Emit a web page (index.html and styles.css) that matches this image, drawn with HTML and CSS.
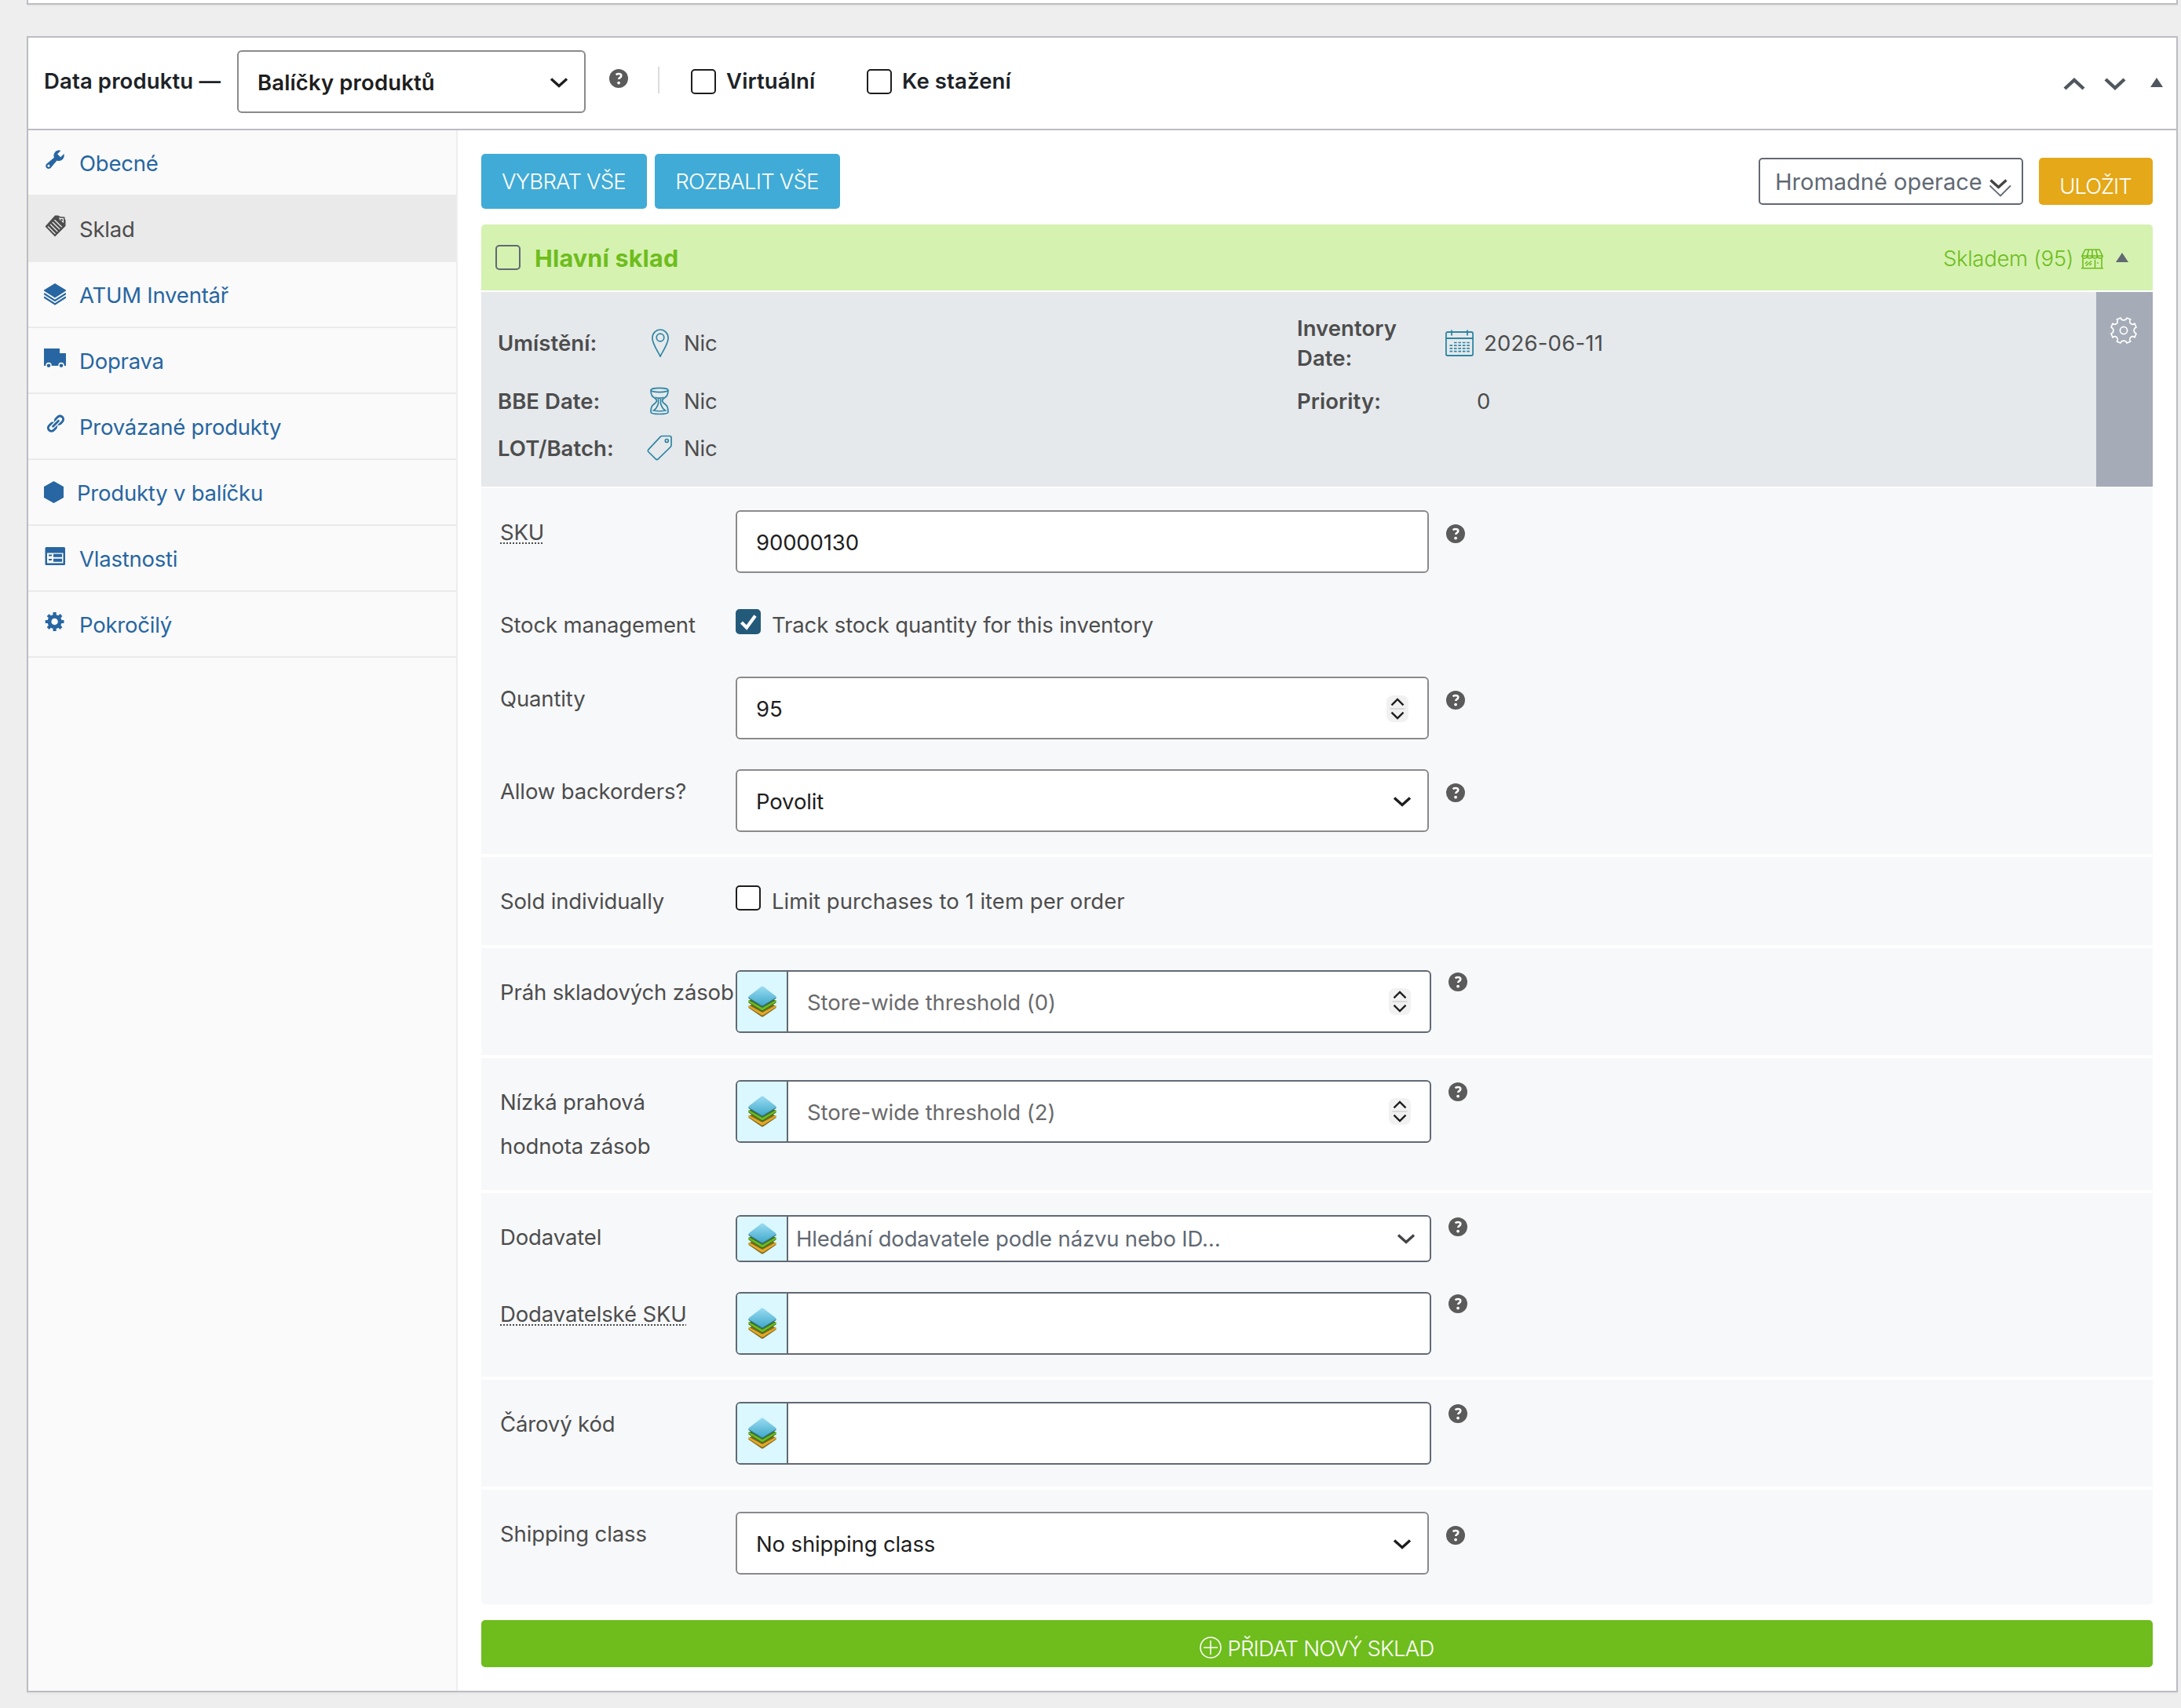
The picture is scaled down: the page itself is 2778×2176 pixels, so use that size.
FILE: index.html
```html
<!DOCTYPE html>
<html lang="cs">
<head>
  <meta charset="UTF-8" />
  <meta name="viewport" content="width=device-width, initial-scale=1.0"/>
  <title>Data produktu</title>
  <link rel="stylesheet" href="styles.css">
</head>
<body>
  <!-- Shared icons -->
  <svg class="sprite" width="0" height="0">
    <defs>
      <linearGradient id="blueLayer" x1="0" y1="0" x2="0" y2="1">
        <stop offset="0" stop-color="#9adcf2" />
        <stop offset="1" stop-color="#41a9cb" />
      </linearGradient>
    </defs>
    <symbol id="help" viewBox="0 0 24 24">
      <circle cx="12" cy="12" r="12" fill="#5b5b5b" />
      <path d="M8.6 7.2c1-.8 2.2-1.2 3.5-1.2 2 0 3.2.9 3.2 2.4 0 1.3-.8 1.9-1.7 2.5-.9.6-1.3 1-1.3 2.2" fill="none" stroke="#fff" stroke-width="2.6" />
      <circle cx="12.1" cy="17.6" r="1.9" fill="#fff" />
    </symbol>
    <symbol id="chevron" viewBox="0 0 24 14">
      <path d="M2 2.5 L12 11.5 L22 2.5" fill="none" stroke="currentColor" stroke-width="3.4" />
    </symbol>
    <symbol id="stepper" viewBox="0 0 28 34">
      <rect width="28" height="34" rx="8" fill="#f1f1f1" />
      <path d="M4.5 17 H23.5" stroke="#dadada" stroke-width="2" />
      <path d="M6.5 12.3 L14 5 L21.5 12.3 M6.5 21.7 L14 29 L21.5 21.7" fill="none" stroke="#1e1e1e" stroke-width="2.4" />
    </symbol>
    <symbol id="layers" viewBox="0 0 36 40">
      <path d="M.5 26 L4 24 L32 24 L35.5 26 V28 L19.5 39 Q18 40 16.5 39 L.5 28 Z" fill="#7d6a25" />
      <path d="M.5 24.5 L18 34 L35.5 24.5 V27 L19.5 37 Q18 38 16.5 37 L.5 27 Z" fill="#e6a923" />
      <path d="M.5 19 L4 17 L32 17 L35.5 19 V21.5 L19.5 32 Q18 33 16.5 32 L.5 21.5 Z" fill="#3c6f24" />
      <path d="M.5 18 L18 28 L35.5 18 V20.5 L19.5 30.5 Q18 31.5 16.5 30.5 L.5 20.5 Z" fill="#6ebd1c" />
      <path d="M.5 14 L18 25 L35.5 14 V16 L19.5 26 Q18 27 16.5 26 L.5 16 Z" fill="#35738a" />
      <path d="M16.5 .9 Q18 0 19.5 .9 L35 13 Q36 14 35 15 L19.5 24.5 Q18 25.5 16.5 24.5 L1 15 Q0 14 1 13 Z" fill="url(#blueLayer)" />
    </symbol>
  </svg>

  <div class="prev-box"></div>

  <div class="postbox">
    <div class="postbox-header">
      <span class="title bold">Data produktu —</span>
      <div class="type-select"><span class="bold">Balíčky produktů</span><svg class="chevron"><use href="#chevron" /></svg></div>
      <svg class="help"><use href="#help" /></svg>
      <span class="divider"></span>
      <span class="checkbox"></span>
      <span class="virtual bold">Virtuální</span>
      <span class="checkbox"></span>
      <span class="download bold">Ke stažení</span>
      <div class="handles">
        <svg class="h-up" viewBox="0 0 28 16"><path d="M2 14 L14 3 L26 14" fill="none" stroke="#50575e" stroke-width="4.4" /></svg>
        <svg class="h-down" viewBox="0 0 28 16"><path d="M2 2 L14 13 L26 2" fill="none" stroke="#50575e" stroke-width="4.4" /></svg>
        <svg class="triangle" viewBox="0 0 16 12"><path d="M8 0 L16 12 H0 Z" fill="#50575e" /></svg>
      </div>
    </div>

    <div class="panel-wrap">
      <ul class="tabs">
        <li>
          <svg class="tab-icon raised" viewBox="0.5 1 19 19"><path fill="currentColor" d="M16.68 9.77c-1.34 1.34-3.3 1.67-4.95.99l-5.41 6.52c-.99.99-2.59.99-3.58 0s-.99-2.59 0-3.57l6.52-5.42c-.68-1.65-.35-3.61.99-4.95 1.28-1.28 3.12-1.62 4.72-1.06l-2.89 2.89 2.82 2.82 2.86-2.87c.53 1.58.18 3.39-1.08 4.65zM3.81 16.21c.4.39 1.04.39 1.43 0 .4-.4.4-1.04 0-1.43-.39-.4-1.03-.4-1.43 0-.39.39-.39 1.03 0 1.43z"/></svg>
          <span>Obecné</span>
        </li>
        <li class="active">
          <svg class="tab-icon raised" viewBox="0 0 28 28">
            <path d="M14 0.5 H18 L27.5 6 V14 L14 27.5 L1.5 14.5 Z" fill="currentColor" />
            <path d="M5 14.5 L14.5 24 M8 11.8 L17.3 21 M10.8 9 L20 18 M13.5 6.3 L22.7 15.2" stroke="#eaeaea" stroke-width="1.3" />
            <path d="M17.5 2.5 L25.8 3.2 L25.8 11.5 L20 7 Z" fill="#eaeaea" stroke="currentColor" stroke-width="1.4" />
            <circle cx="22.5" cy="6.3" r="1.4" fill="currentColor" />
          </svg>
          <span>Sklad</span>
        </li>
        <li>
          <svg class="tab-icon" viewBox="0 0 28 28">
            <path d="M14 0 L28 8.5 V9.5 L14 18.5 L0 9.5 V8.5 Z" fill="currentColor" />
            <path d="M0 13 L14 22 L28 13 M0 17.5 L14 26.5 L28 17.5" fill="none" stroke="currentColor" stroke-width="2.2" />
          </svg>
          <span>ATUM Inventář</span>
        </li>
        <li>
          <svg class="tab-icon raised" viewBox="0 0 28 28">
            <path d="M0 2 H20 V8 H28 V24 H0 Z" fill="currentColor" />
            <circle cx="6" cy="23.5" r="3.7" fill="#fafafa" /><circle cx="22" cy="23.5" r="3.7" fill="#fafafa" />
            <circle cx="6" cy="23.8" r="2.3" fill="currentColor" /><circle cx="22" cy="23.8" r="2.3" fill="currentColor" />
          </svg>
          <span>Doprava</span>
        </li>
        <li>
          <svg class="tab-icon raised" viewBox="-1 -0.5 21.5 21.5"><path fill="currentColor" d="M17.74 2.76c1.68 1.69 1.68 4.41 0 6.1l-1.53 1.52c-1.12 1.12-2.7 1.47-4.14 1.09l2.62-2.61.76-.77.76-.76c.84-.84.84-2.2 0-3.04-.84-.85-2.2-.85-3.04 0l-.77.76-3.38 3.38c-.37-1.44-.02-3.02 1.1-4.14l1.52-1.53c1.69-1.68 4.42-1.68 6.1 0zM8.59 13.43l5.34-5.34c.42-.42.42-1.1 0-1.52-.44-.43-1.13-.39-1.53 0l-5.33 5.34c-.42.42-.42 1.1 0 1.52.44.43 1.13.39 1.52 0zm-.76 2.29l4.14-4.15c.38 1.44.03 3.02-1.09 4.14l-1.52 1.53c-1.69 1.68-4.41 1.68-6.1 0-1.68-1.68-1.68-4.42 0-6.1l1.53-1.52c1.12-1.12 2.7-1.47 4.14-1.1l-4.14 4.15c-.85.84-.85 2.2 0 3.05.84.84 2.2.84 3.04 0z"/></svg>
          <span>Provázané produkty</span>
        </li>
        <li>
          <svg class="tab-icon narrow" viewBox="0 0 25 28"><path d="M12.5 0 L25 7 V21 L12.5 28 L0 21 V7 Z" fill="currentColor" /></svg>
          <span>Produkty v balíčku</span>
        </li>
        <li>
          <svg class="tab-icon raised" viewBox="0 0 28 28">
            <rect x="1.5" y="3" width="25.5" height="23" rx="1.5" fill="currentColor" />
            <rect x="4" y="10.5" width="20.5" height="13" fill="#fafafa" />
            <path d="M6 13.5 H10 M6 19 H10" stroke="currentColor" stroke-width="2" />
            <path d="M12 13.8 H23 M12 19.7 H23" stroke="currentColor" stroke-width="4" />
          </svg>
          <span>Vlastnosti</span>
        </li>
        <li>
          <svg class="tab-icon raised" viewBox="-0.2 0.5 20 20"><path fill="currentColor" d="M18 12h-2.18c-.17.7-.44 1.35-.81 1.93l1.54 1.54-2.1 2.1-1.54-1.54c-.58.36-1.23.63-1.91.79V19H8v-2.18c-.68-.16-1.33-.43-1.91-.79l-1.54 1.54-2.12-2.12 1.54-1.54c-.36-.58-.63-1.23-.79-1.91H1V9.03h2.17c.16-.7.44-1.35.8-1.94L2.43 5.55l2.1-2.1 1.54 1.54c.58-.37 1.24-.64 1.93-.81V2h3v2.18c.68.16 1.33.43 1.91.79l1.54-1.54 2.12 2.12-1.54 1.54c.36.59.64 1.24.8 1.94H18V12zm-8.5 1.5c1.66 0 3-1.34 3-3s-1.34-3-3-3-3 1.34-3 3 1.34 3 3 3z"/></svg>
          <span>Pokročilý</span>
        </li>
      </ul>

      <div class="content">
        <div class="toolbar">
          <button class="btn blue">VYBRAT VŠE</button>
          <button class="btn blue">ROZBALIT VŠE</button>
          <div class="bulk">
            <span>Hromadné operace</span>
            <svg viewBox="0 0 28 24">
              <path d="M1.5 2.5 L11.5 11.5 L21.5 2.5" fill="none" stroke="#444" stroke-width="3.4" />
              <path d="M.5 9.5 L14 22.5 L27 9.5" fill="none" stroke="#616973" stroke-width="1.8" />
            </svg>
          </div>
          <button class="btn orange">ULOŽIT</button>
        </div>

        <div class="inv-header">
          <span class="checkbox light"></span>
          <span class="inv-name">Hlavní sklad</span>
          <span class="inv-stock">Skladem (95)</span>
          <svg class="store" viewBox="0 0 28 26">
            <g fill="none" stroke="#6ebd1c" stroke-width="1.6">
              <path d="M5 1 H23 L27 9 H1 Z M9.5 1 L7.5 9 M14 1 V9 M18.5 1 L20.5 9" />
              <path d="M1 9 a3.25 3 0 0 0 6.5 0 a3.25 3 0 0 0 6.5 0 a3.25 3 0 0 0 6.5 0 a3.25 3 0 0 0 6.5 0" />
              <path d="M2 12 V24.5 M26 12 V24.5 M0 24.8 H28 M17.5 24 V14 M5 19 L8 16 M6 21.5 L13 15.5 M10.5 21 L13 18.5" />
            </g>
            <circle cx="21" cy="18" r="1" fill="#6ebd1c" />
          </svg>
          <svg class="triangle" viewBox="0 0 16 12"><path d="M8 0 L16 12 H0 Z" fill="#616973" /></svg>
        </div>

        <div class="inv-info">
          <div class="info-grid">
            <span class="info-label">Umístění:</span>
            <span class="info-value">
              <svg viewBox="0 0 36 36"><g fill="none" stroke="#2f85a3" stroke-width="1.7"><path d="M18 35 C14 27 7.9 19 7.9 11.5 A10.1 10.5 0 0 1 28.1 11.5 C28.1 19 22 27 18 35 Z" /><circle cx="18" cy="11" r="4.8" /></g></svg>
              Nic
            </span>
            <span class="info-label">Inventory Date:</span>
            <span class="info-value date">
              <svg viewBox="0 0 36 36"><g fill="none" stroke="#2f85a3" stroke-width="1.8"><rect x=".9" y="4" width="34.2" height="30" rx="2" /><path d="M1 12 H35 M8 1.5 V8.5 M28 1.5 V8.5" /></g><path d="M11 17.5 H32 M5.5 21.2 H32 M5.5 24.9 H32 M5.5 28.6 H32" stroke="#2f85a3" stroke-width="1.7" stroke-dasharray="3.6 1.85" /></svg>
              2026-06-11
            </span>

            <span class="info-label">BBE Date:</span>
            <span class="info-value">
              <svg viewBox="0 0 36 36"><g fill="none" stroke="#2f85a3" stroke-width="1.7"><ellipse cx="17" cy="4" rx="11" ry="2.6" /><path d="M6 4 C6 12 9 12.5 12 15 C14.5 17 13 19.5 11 21 C7 24 6 26 6 32 Q6 34.5 17 34.5 Q28 34.5 28 32 C28 26 27 24 23 21 C21 19.5 19.5 17 22 15 C25 12.5 28 12 28 4" /><path d="M11.5 13.2 Q17 15 22.5 13.2 M15.5 14 V21 Q14 27 9.5 30 Q17 31.5 24.5 30 Q20 27 18.5 21 V14" /></g></svg>
              Nic
            </span>
            <span class="info-label">Priority:</span>
            <span class="info-value priority">0</span>

            <span class="info-label">LOT/Batch:</span>
            <span class="info-value">
              <svg viewBox="0 0 36 36"><g fill="none" stroke="#2f85a3" stroke-width="1.7"><path d="M20.5 2.5 H30 Q32 2.5 32 4.5 V14 Q32 15.5 31 16.5 L15 32 Q13.7 33 12.5 32 L2.8 22.5 Q1.6 21 2.8 19.8 L18 3.6 Q19 2.5 20.5 2.5 Z" /><circle cx="26.3" cy="8.5" r="2" /></g></svg>
              Nic
            </span>
          </div>
          <div class="inv-settings">
            <svg viewBox="0 0 34 34"><g fill="none" stroke="#fff" stroke-width="1.7" stroke-linejoin="round"><path d="M21 1 L25.8 3 A3.6 3.6 0 0 0 31 8.2 L33 13 A4.2 4.2 0 0 0 33 21 L31 25.8 A3.6 3.6 0 0 0 25.8 31 L21 33 A4.2 4.2 0 0 0 13 33 L8.2 31 A3.6 3.6 0 0 0 3 25.8 L1 21 A4.2 4.2 0 0 0 1 13 L3 8.2 A3.6 3.6 0 0 0 8.2 3 L13 1 A4.2 4.2 0 0 0 21 1 Z" /><circle cx="17" cy="17" r="4.6" /></g></svg>
          </div>
        </div>

        <div class="group">
          <div class="row">
            <label><abbr>SKU</abbr></label>
            <div class="field">90000130</div>
            <svg class="help"><use href="#help" /></svg>
          </div>
          <div class="row">
            <label>Stock management</label>
            <span class="checkbox checked"><svg viewBox="0 0 32 32"><path d="M7.5 17 L14 23.5 L25 8.5" fill="none" stroke="#fff" stroke-width="4.2" /></svg></span>
            <span>Track stock quantity for this inventory</span>
          </div>
          <div class="row">
            <label>Quantity</label>
            <div class="field">95<svg class="stepper"><use href="#stepper" /></svg></div>
            <svg class="help"><use href="#help" /></svg>
          </div>
          <div class="row">
            <label>Allow backorders?</label>
            <div class="field">Povolit<svg class="chevron"><use href="#chevron" /></svg></div>
            <svg class="help"><use href="#help" /></svg>
          </div>
        </div>

        <div class="group">
          <div class="row">
            <label>Sold individually</label>
            <span class="checkbox"></span>
            <span class="limit">Limit purchases to 1 item per order</span>
          </div>
        </div>

        <div class="group">
          <div class="row">
            <label>Práh skladových zásob</label>
            <div class="field atum"><span class="addon"><svg><use href="#layers" /></svg></span><span class="placeholder">Store-wide threshold (0)</span><svg class="stepper"><use href="#stepper" /></svg></div>
            <svg class="help high"><use href="#help" /></svg>
          </div>
        </div>

        <div class="group">
          <div class="row">
            <label>Nízká prahová<br>hodnota zásob</label>
            <div class="field atum"><span class="addon"><svg><use href="#layers" /></svg></span><span class="placeholder">Store-wide threshold (2)</span><svg class="stepper"><use href="#stepper" /></svg></div>
            <svg class="help high"><use href="#help" /></svg>
          </div>
        </div>

        <div class="group">
          <div class="row">
            <label>Dodavatel</label>
            <div class="field atum supplier"><span class="addon"><svg><use href="#layers" /></svg></span><span class="placeholder">Hledání dodavatele podle názvu nebo ID…</span><svg class="chevron"><use href="#chevron" /></svg></div>
            <svg class="help high"><use href="#help" /></svg>
          </div>
          <div class="row">
            <label><abbr>Dodavatelské SKU</abbr></label>
            <div class="field atum"><span class="addon"><svg><use href="#layers" /></svg></span></div>
            <svg class="help high"><use href="#help" /></svg>
          </div>
        </div>

        <div class="group">
          <div class="row">
            <label>Čárový kód</label>
            <div class="field atum"><span class="addon"><svg><use href="#layers" /></svg></span></div>
            <svg class="help high"><use href="#help" /></svg>
          </div>
        </div>

        <div class="group last">
          <div class="row">
            <label>Shipping class</label>
            <div class="field">No shipping class<svg class="chevron"><use href="#chevron" /></svg></div>
            <svg class="help"><use href="#help" /></svg>
          </div>
        </div>

        <button class="add-btn">
          <svg viewBox="0 0 28 28"><g fill="none" stroke="#fff" stroke-width="1.6"><circle cx="14" cy="14" r="13" /><path d="M14 5 V23 M5 14 H23" /></g></svg>
          <span>PŘIDAT NOVÝ SKLAD</span>
        </button>
      </div>
    </div>
  </div>
</body>
</html>
```
FILE: styles.css
```css
* {
  box-sizing: border-box;
}
body {
  margin: 0;
  padding: 0 4px 0 34px;
  background: #eee;
  color: #4d4d4d;
  font-family: Inter, "Liberation Sans", sans-serif;
  font-size: 27.5px;
  letter-spacing: -0.13px;
  height: 2176px;
  overflow: hidden;
}
svg {
  display: block;
  flex: none;
}
.sprite {
  position: absolute;
}
button {
  border: 0;
  padding: 0;
  font: inherit;
}
.prev-box {
  height: 6px;
  margin-bottom: 40px;
  background: #fff;
  border: 2px solid #bcbdc3;
  border-top: 0;
  box-shadow: 0 2px 2px rgba(0, 0, 0, .04);
}
.postbox {
  height: 2110px;
  background: #fff;
  border: 2px solid #bcbdc3;
  box-shadow: 0 2px 2px rgba(0, 0, 0, .04);
}

/* header */
.postbox-header {
  display: flex;
  align-items: center;
  height: 118px;
  padding: 0 17px 4px 20px;
  border-bottom: 2px solid #bcbdc3;
  color: #1d2327;
}
.bold {
  font-weight: 600;
  letter-spacing: 0.13px;
  white-space: nowrap;
}
.title {
  width: 246px;
  padding-bottom: 2px;
}
.type-select {
  display: flex;
  align-items: center;
  justify-content: space-between;
  width: 444px;
  height: 80px;
  margin-right: 30px;
  padding: 1px 20px 0 24px;
  border: 2px solid #8a8a8c;
  border-radius: 6px;
  color: #1e1e1e;
}
.help {
  width: 24px;
  height: 24px;
}
.postbox-header .help {
  margin-bottom: 8px;
}
.divider {
  width: 2px;
  height: 34px;
  margin: 0 40px 4px 38px;
  background: #dcdcde;
}
.checkbox {
  flex: none;
  width: 32px;
  height: 32px;
  margin-right: 13px;
  background: #fff;
  border: 2px solid #1e1e1e;
  border-radius: 5px;
}
.virtual {
  width: 179px;
  padding-bottom: 2px;
}
.download {
  padding-bottom: 2px;
}
.handles {
  display: flex;
  align-items: center;
  margin-left: auto;
}
.h-up,
.h-down {
  width: 28px;
  height: 16px;
  margin-top: 5px;
  margin-right: 24px;
}
.h-down {
  margin-right: 31px;
}
.triangle {
  width: 16px;
  height: 12px;
}
.handles .triangle {
  margin-top: 1px;
}
.chevron {
  width: 24px;
  height: 14px;
  margin-left: auto;
}

/* tabs */
.panel-wrap {
  display: flex;
  height: 1988px;
}
.tabs {
  width: 547px;
  margin: 0;
  padding: 0;
  list-style: none;
  background: #fafafa;
  border-right: 2px solid #eee;
  letter-spacing: -0.22px;
}
.tabs li {
  display: flex;
  align-items: center;
  gap: 17px;
  height: 84px;
  padding-left: 20px;
  border-bottom: 2px solid #eaeaea;
  color: #2766a2;
}
.tabs span {
  padding-top: 1px;
}
.tabs .active {
  background: #eaeaea;
  color: #4d4d4d;
}
.tab-icon {
  width: 28px;
  height: 28px;
}
.tab-icon.narrow {
  width: 25px;
}
.tab-icon.raised {
  margin-bottom: 6px;
}

/* content */
.content {
  width: 2129px;
  margin-left: 30px;
  padding-top: 30px;
}
.toolbar {
  display: flex;
  gap: 10px;
  height: 90px;
}
.btn {
  height: 70px;
  padding: 0 1px 0 0;
  color: #fff;
  font-weight: 300;
  letter-spacing: -0.8px;
  border-radius: 5px;
}
.blue {
  width: 211px;
  background: #40abd6;
}
.blue + .blue {
  width: 236px;
}
.bulk {
  display: flex;
  align-items: center;
  gap: 9px;
  width: 337px;
  height: 60px;
  margin: 5px 10px 0 auto;
  padding-left: 19px;
  border: 2px solid #616973;
  border-radius: 5px;
  color: #616973;
  font-size: 29px;
  letter-spacing: 0;
}
.bulk span {
  padding-top: 1px;
}
.bulk svg {
  width: 28px;
  height: 24px;
  margin-top: 15px;
}
.orange {
  width: 145px;
  height: 60px;
  margin-top: 5px;
  padding-top: 11px;
  background: #e4a818;
  letter-spacing: -1px;
}

/* inventory */
.inv-header {
  display: flex;
  align-items: center;
  height: 84px;
  padding: 0 31px 0 18px;
  background: #d5f2b1;
  border-radius: 5px 5px 0 0;
  color: #6ebd1c;
}
.checkbox.light {
  margin-right: 18px;
  background: none;
  border-color: #616973;
}
.inv-name {
  padding-top: 1px;
  font-size: 30.5px;
  font-weight: 700;
  letter-spacing: 0.2px;
}
.inv-stock {
  margin-left: auto;
  padding-top: 1px;
  font-weight: 300;
  letter-spacing: -0.3px;
}
.store {
  width: 28px;
  height: 26px;
  margin: 4px 16px 0 10px;
}
.inv-info {
  display: flex;
  justify-content: space-between;
  height: 248px;
  margin: 2px 0;
  background: #e5e9ec;
}
.info-grid {
  display: grid;
  grid-template-columns: 189px 829px 189px 300px;
  grid-template-rows: 88px 60px 60px;
  align-items: center;
  padding: 21px 0 0 21px;
  line-height: 38px;
}
.info-label {
  padding-right: 40px;
  font-weight: 600;
  letter-spacing: 0.05px;
}
.info-value {
  display: flex;
  align-items: center;
  gap: 12px;
}
.info-value svg {
  width: 36px;
  height: 36px;
}
.date {
  gap: 13px;
  letter-spacing: 0.2px;
}
.priority {
  padding-left: 40px;
}
.inv-settings {
  width: 72px;
  padding: 32px 0 0 18px;
  background: #a5acb8;
}
.inv-settings svg {
  width: 34px;
  height: 34px;
}

/* fields */
.group {
  display: flex;
  flex-direction: column;
  gap: 38px;
  margin-bottom: 4px;
  padding: 28px 24px;
  background: #f7f8fa;
}
.group.last {
  margin-bottom: 20px;
  padding-bottom: 38px;
  border-radius: 0 0 5px 5px;
}
.row {
  display: flex;
  align-items: flex-start;
  line-height: 56px;
}
.row label {
  width: 300px;
  white-space: nowrap;
}
.row abbr {
  text-decoration: underline dotted 2px;
  text-underline-offset: 3px;
}
.limit {
  letter-spacing: 0.03px;
}
.field {
  display: flex;
  align-items: center;
  width: 883px;
  height: 80px;
  padding: 1px 20px 0 24px;
  background: #fff;
  border: 2px solid #8a8a8c;
  border-radius: 6px;
  color: #1e1e1e;
}
.row .help {
  margin: 18px 0 0 22px;
}
.row .help.high {
  margin-top: 3px;
}
.row .checkbox {
  margin: 8px 14px 0 0;
}
.row .checked {
  background: #235a7a;
  border-color: #235a7a;
}
.checked svg {
  width: 32px;
  height: 32px;
  margin: -2px;
}
.stepper {
  width: 28px;
  height: 34px;
  margin: 0 4px 0 auto;
}
.atum {
  width: 886px;
  padding-top: 0;
  padding-left: 0;
  border-color: #616973;
  overflow: hidden;
}
.addon {
  display: flex;
  align-items: center;
  justify-content: center;
  width: 65px;
  height: 100%;
  background: #dbf7ff;
  border-right: 2px solid #616973;
}
.addon svg {
  width: 36px;
  height: 40px;
}
.placeholder {
  margin-left: 24px;
  padding-top: 1px;
  color: #6a6a6c;
  letter-spacing: -0.05px;
}
.supplier {
  height: 60px;
  padding-right: 18px;
  color: #444;
}
.supplier .placeholder {
  margin-left: 10px;
  padding-top: 0;
  color: #616973;
  letter-spacing: -0.17px;
}
.add-btn {
  display: flex;
  align-items: center;
  justify-content: center;
  gap: 7px;
  width: 100%;
  height: 60px;
  padding-top: 11px;
  background: #6ebd1c;
  border-radius: 5px;
  color: #fff;
  font-weight: 300;
  letter-spacing: -0.8px;
}
.add-btn svg {
  width: 28px;
  height: 28px;
  margin-bottom: 2px;
}
```
